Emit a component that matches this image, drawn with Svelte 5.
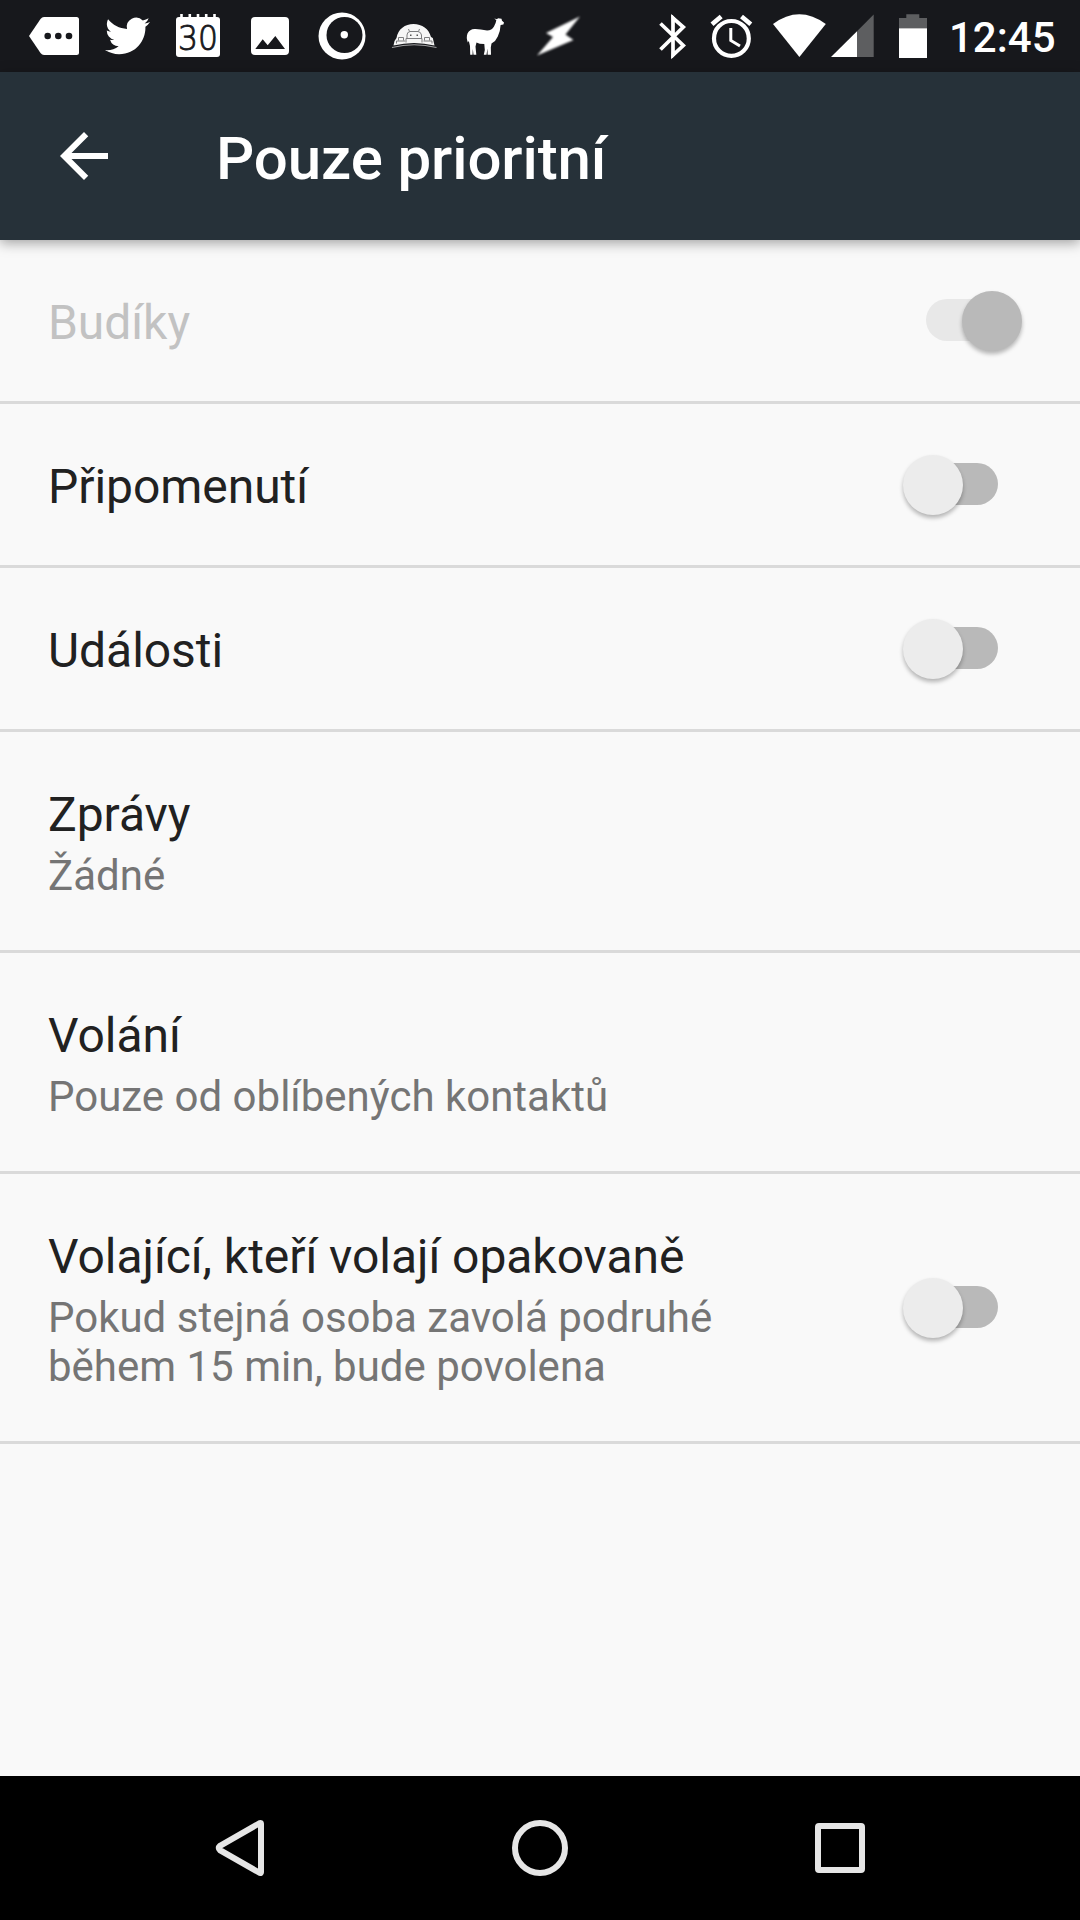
<script>
  let items = [
    { title: 'Budíky', toggle: true, checked: true, disabled: true },
    { title: 'Připomenutí', toggle: true, checked: false },
    { title: 'Události', toggle: true, checked: false },
    { title: 'Zprávy', summary: 'Žádné' },
    { title: 'Volání', summary: 'Pouze od oblíbených kontaktů' },
    {
      title: 'Volající, kteří volají opakovaně',
      summary: 'Pokud stejná osoba zavolá podruhé během 15 min, bude povolena',
      toggle: true,
      checked: false
    }
  ];

  function toggleItem(index) {
    if (items[index].disabled) return;
    items[index].checked = !items[index].checked;
  }
</script>

<div class="screen">
  <div class="status">
    <div class="notifications">
      <svg width="72" height="72" viewBox="0 0 72 72">
        <path fill="#fff" d="M11 36 22.500 19Q24 17 26 17H58.500Q61 17 61 19.500V52.500Q61 55 58.500 55H26Q24 55 22.500 53Z" />
        <g fill="#17181c">
          <circle cx="29.700" cy="36" r="3.300" />
          <circle cx="40.300" cy="36" r="3.300" />
          <circle cx="51" cy="36" r="3.300" />
        </g>
      </svg>
      <svg width="72" height="72" viewBox="0 0 72 72">
        <path
          fill="#fff"
          transform="translate(15 13.400) scale(1.875)"
          d="M23.953 4.57a10 10 0 01-2.825.775 4.958 4.958 0 002.163-2.723c-.951.555-2.005.959-3.127 1.184a4.92 4.92 0 00-8.384 4.482C7.69 8.095 4.067 6.13 1.64 3.162a4.822 4.822 0 00-.666 2.475c0 1.71.87 3.213 2.188 4.096a4.904 4.904 0 01-2.228-.616v.06a4.923 4.923 0 003.946 4.827 4.996 4.996 0 01-2.212.085 4.936 4.936 0 004.604 3.417 9.867 9.867 0 01-6.102 2.105c-.39 0-.779-.023-1.17-.067a13.995 13.995 0 007.557 2.209c9.053 0 13.998-7.496 13.998-13.985 0-.21 0-.42-.015-.63A9.935 9.935 0 0024 4.59z"
        />
      </svg>
      <svg width="72" height="72" viewBox="0 0 72 72">
        <rect x="14" y="17" width="44" height="40" rx="3" fill="#fff" />
        <path stroke="#fff" stroke-width="2.600" d="M19.500 14v4M27.800 14v4M36 14v4M44.200 14v4M52.500 14v4" />
        <text class="day" x="16" y="49.500" textLength="40" lengthAdjust="spacingAndGlyphs">30</text>
      </svg>
      <svg width="72" height="72" viewBox="0 0 72 72">
        <rect x="17" y="17" width="38" height="38" rx="4" fill="#fff" />
        <path fill="#17181c" d="M21.300 49 28.700 39.300 33.700 45.300 41.300 36 51 49Z" />
      </svg>
      <svg width="72" height="72" viewBox="0 0 72 72">
        <circle cx="36" cy="36" r="23.500" fill="#fff" />
        <circle cx="38.500" cy="35" r="18" fill="#17181c" />
        <circle cx="38.300" cy="34.700" r="3.700" fill="#fff" />
      </svg>
      <svg width="72" height="72" viewBox="0 0 72 72">
        <path fill="#f6f6f6" d="M18.500 38C20 29 27 24 35.500 24S51 29 53 37L54.800 38 56.500 45.500Q36 40.500 15.500 45.500L16.500 41Z" />
        <path fill="none" stroke="#a0a0a2" stroke-width="1.200" d="M14 47.500Q36 42 58.500 47.500" />
        <g fill="none" stroke="#7c7d7f" stroke-width="1">
          <path d="M28 42.500V38.500H44V42.500M29 38.500V35Q29 32 32 31.500H40Q43 32 43.500 35V38.500M31.500 31.500 30.500 29M40.500 31.500 41.500 29" />
          <path d="M18.500 43.500V41H27M20.500 40.500V37.500H25.500V40.500M45.500 41H54V43.500M46.500 40.500V37.500H51.500V40.500" />
        </g>
        <path fill="#555" d="M32 34.500h1.500v1.500H32zM38.500 34.500h1.500v1.500h-1.500z" />
      </svg>
      <svg width="72" height="72" viewBox="0 0 72 72">
        <path
          fill="#fff"
          d="M44.300 18.500 47 19.300 48 18.200 51.500 18.700 52 20.800 54 22.600 53.400 24.600 50.600 25Q50.400 31 47.800 36.500 46 41 41.500 43.500L40.800 47.500 41 54.800H37.600L37.500 48.500 36.500 54.800H33.800L34.800 50 34.300 44Q29 44 26.500 42.500L25.500 46.500 26.300 54.800H23.500L22.800 49 22.500 54.800H20.200L20 46 18.800 41 17.800 42.500Q16 37 17.500 33.500 20 28.500 25.500 29 31 29.500 35.500 30.300 41.500 31 44 26.500 46 23 46.300 20.300Z"
        />
      </svg>
      <svg width="72" height="72" viewBox="0 0 72 72">
        <path class="bolt" fill="#fff" d="M58 16.500 24 33 31 37 15 55.500 51.500 40 43.500 34.500Z" />
      </svg>
    </div>

    <div class="system">
      <svg width="60" height="72" viewBox="0 0 60 72">
        <path fill="none" stroke="#fff" stroke-width="3.700" d="M18.500 23.500 41.300 45.500 31 55V18L41.300 27 18.500 49.500" />
        <path fill="#fff" d="M29.200 15H30.500L34 19 30 24ZM29.200 58H30.500L34 54 30 49Z" />
      </svg>
      <svg width="60" height="72" viewBox="0 0 60 72">
        <g fill="none" stroke="#fff">
          <circle cx="29.400" cy="38.400" r="17.400" stroke-width="4.200" />
          <path stroke-width="3" d="M28.800 28V40.500L38 46" />
          <path stroke-width="4.600" d="M10 24.300 19.200 16.500M39.500 16.500 48.800 24.300" />
        </g>
      </svg>
      <svg width="66" height="72" viewBox="0 0 66 72">
        <path fill="#fff" d="M11 24Q37.300 4.500 63.800 24L37.400 57Z" />
      </svg>
      <svg width="54" height="72" viewBox="0 0 54 72">
        <path fill="#5d5e60" d="M29 31.200 45.700 14.500V57H29Z" />
        <path fill="#fff" d="M3 57 29 31.200V57Z" />
      </svg>
      <svg width="60" height="72" viewBox="0 0 60 72">
        <path fill="#5d5e60" d="M17 28.500V18H24.300V14.300H37.300V18H45V28.500Z" />
        <path fill="#fff" d="M17 28.300H45V58H17Z" />
      </svg>
      <span class="clock">12:45</span>
    </div>
  </div>

  <header>
    <svg width="72" height="72" viewBox="0 0 24 24">
      <path fill="#fff" d="M20 11H7.830l5.590-5.590L12 4l-8 8 8 8 1.410-1.410L7.830 13H20v-2z" />
    </svg>
    <h1>Pouze prioritní</h1>
  </header>

  <ul>
    {#each items as item, index}
      <li class:disabled={item.disabled}>
        <div class="text">
          <p class="title">{item.title}</p>
          {#if item.summary}
            <p class="summary">{item.summary}</p>
          {/if}
        </div>
        {#if item.toggle}
          <button
            class="switch"
            class:on={item.checked}
            disabled={item.disabled}
            aria-label={item.title}
            on:click={() => toggleItem(index)}
          >
            <span class="thumb"></span>
          </button>
        {/if}
      </li>
    {/each}
  </ul>

  <nav>
    <svg width="72" height="72" viewBox="0 0 72 72">
      <path d="M16 33.800 56 11Q57 10.700 57 11.700V60.300Q57 61.300 56 61L16 38.200Q13.500 36 16 33.800Z" />
    </svg>
    <svg width="72" height="72" viewBox="0 0 72 72">
      <circle cx="36" cy="36" r="25" />
    </svg>
    <svg width="72" height="72" viewBox="0 0 72 72">
      <rect x="14" y="14" width="44" height="44" rx="1" />
    </svg>
  </nav>
</div>

<style>
  :global(body) {
    margin: 0;
    background: #f9f9f9;
  }

  .screen {
    display: flex;
    flex-direction: column;
    width: 1080px;
    height: 1920px;
    background: #f9f9f9;
    font-family: Roboto, sans-serif;
    color: #212121;
  }

  svg {
    display: block;
    flex: none;
  }

  .status {
    display: flex;
    justify-content: space-between;
    height: 72px;
    padding: 0 22px 0 18px;
    background: #17181c;
  }

  .notifications,
  .system {
    display: flex;
    align-items: center;
  }

  .day {
    font-family: "DejaVu Sans", sans-serif;
    font-size: 33px;
    font-weight: 200;
    fill: #17181c;
    stroke: #17181c;
    stroke-width: 0.9px;
  }

  .bolt {
    filter: blur(1px);
  }

  .clock {
    width: 109px;
    margin-left: 7px;
    padding-top: 3px;
    font-size: 42px;
    font-weight: 500;
    line-height: 72px;
    color: #fff;
  }

  header {
    display: flex;
    align-items: center;
    gap: 96px;
    height: 168px;
    padding-left: 48px;
    background: #263139;
    box-shadow: 0 3px 12px rgba(0, 0, 0, 0.36);
    z-index: 1;
  }

  h1 {
    margin: 6px 0 0;
    font-size: 60px;
    font-weight: 500;
    line-height: 70px;
    letter-spacing: -0.1px;
    color: #fff;
  }

  ul {
    flex: 1;
    margin: 0;
    padding: 0;
    list-style-type: none;
  }

  li {
    display: flex;
    align-items: center;
    justify-content: space-between;
    padding: 0 82px 0 48px;
    border-bottom: 3px solid #dadada;
  }

  .text {
    max-width: 720px;
    padding: 55px 0 50px;
  }

  p {
    margin: 0;
  }

  .title {
    font-size: 48px;
    line-height: 56px;
    letter-spacing: -0.05px;
  }

  .summary {
    width: 700px;
    margin-top: 8px;
    font-size: 42px;
    line-height: 49px;
    color: #757575;
  }

  .disabled .title {
    color: #c2c2c2;
  }

  .switch {
    position: relative;
    width: 72px;
    height: 42px;
    margin-bottom: 1px;
    padding: 0;
    border: none;
    border-radius: 21px;
    background: #b9b9b9;
  }

  .thumb {
    position: absolute;
    top: -8px;
    left: -23px;
    width: 60px;
    height: 60px;
    border-radius: 50%;
    background: #ececec;
    box-shadow: 0 3px 4px rgba(0, 0, 0, 0.28);
  }

  .on .thumb {
    left: 36px;
  }

  .switch:disabled {
    background: #e8e8e8;
  }

  .switch:disabled .thumb {
    background: #b9b9b9;
  }

  nav {
    display: flex;
    align-items: center;
    justify-content: center;
    gap: 228px;
    height: 144px;
    background: #000;
  }

  nav svg {
    fill: none;
    stroke: #e6e6e6;
    stroke-width: 6;
  }
</style>
